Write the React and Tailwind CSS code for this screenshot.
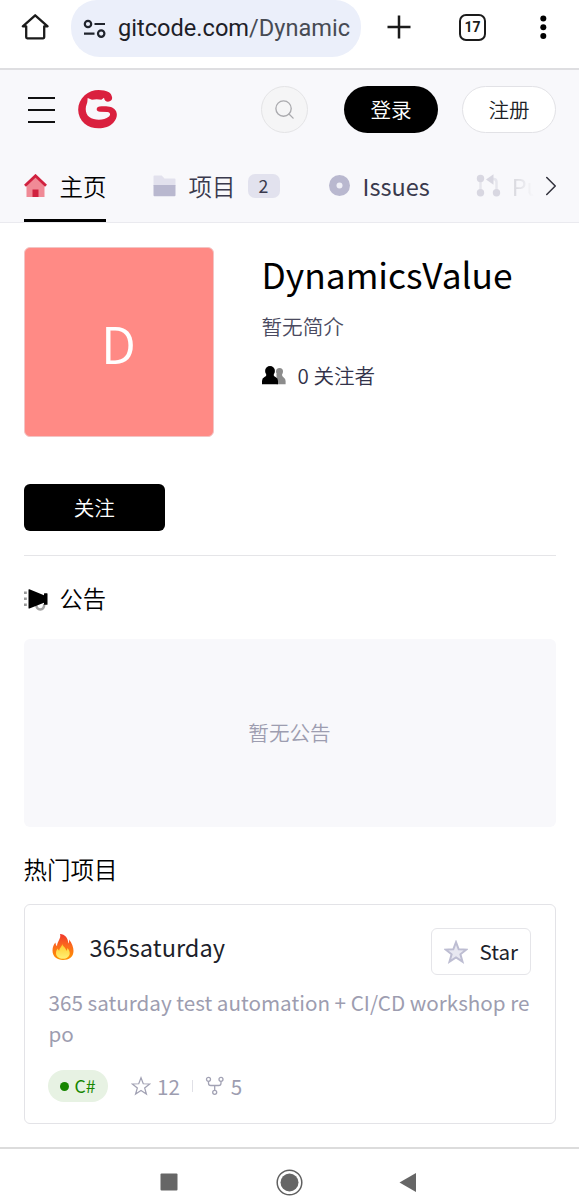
import { ChevronRight, Search } from "lucide-react";

function HomeOutlineIcon() {
  return (
    <svg width="28" height="28" viewBox="0 0 28 28" fill="none" className="shrink-0">
      <path
        d="M1.800 13.300h3.400v11q0 1 1 1h16q1 0 1-1v-11h3.400L14.200 2.300Z"
        stroke="#1b1b1b"
        strokeWidth="2.300"
        strokeLinejoin="round"
      />
    </svg>
  );
}

function TuneIcon() {
  return (
    <svg width="24" height="20" viewBox="0 0 24 20" fill="none" stroke="#20242c" strokeWidth="2.200" className="shrink-0">
      <circle cx="5" cy="5" r="3.200" />
      <path d="M11.500 5H22M1 14.600h10.500" />
      <circle cx="18.200" cy="14.600" r="3.200" />
    </svg>
  );
}

function Logo() {
  return (
    <svg width="39" height="39" viewBox="0 0 117 117" className="shrink-0">
      <path
        fill="#da203e"
        d="M93 7C72-3 41-4 20 16-6 40-6 79 20 101c23 20 67 18 86-3 13-14 14-31 3-41-8-7-18-8-38-8-10 0-15 3-15 9 0 5 4 7 10 7l22 1c10 1 10 9 4 14-14 12-43 12-58 1-12-9-13-27-8-38 3-7 2-11 3-19l13 5c8-2 20-2 28 0l8-6c1 8 6 12 12 12 9 0 14-7 12-14-1-5-4-11-9-14Z"
      />
    </svg>
  );
}

function HouseIcon() {
  return (
    <svg width="23" height="23" viewBox="0 0 23 23" className="shrink-0">
      <path fill="#f08a96" d="M2.500 10.500 11.500 2.500l9 8V23h-18z" />
      <path fill="#d0213f" d="M8.500 15.500h6V23h-6z" />
      <path fill="none" stroke="#d0213f" strokeWidth="2.800" d="m1 11.800 10.500-10L22 11.800" />
    </svg>
  );
}

function FolderIcon() {
  return (
    <svg width="23" height="22" viewBox="0 0 23 22" className="shrink-0">
      <path fill="#e2e1ed" d="M1.500.500h7.200L11.500 3.500h10q1 0 1 1V11H.500V1.500q0-1 1-1Z" />
      <path fill="#b9b8cf" d="M.500 10h22v10.300q0 1-1 1h-20q-1 0-1-1Z" />
    </svg>
  );
}

function IssueIcon() {
  return (
    <svg width="21" height="21" viewBox="0 0 21 21" className="shrink-0">
      <circle cx="10.500" cy="10.500" r="10.500" fill="#b9b8cf" />
      <circle cx="10.500" cy="10.500" r="3" fill="#f0f0f7" />
    </svg>
  );
}

function PullIcon() {
  return (
    <svg width="25" height="23" viewBox="0 0 25 23" className="shrink-0">
      <path fill="none" stroke="#e6e6ed" strokeWidth="2.500" d="M4.500 5v13M13 5h4.500q3 0 3 3v10" />
      <g fill="#d8d7e1">
        <circle cx="4.500" cy="4.500" r="3.700" />
        <circle cx="4.500" cy="18.700" r="3.700" />
        <circle cx="20.500" cy="18.700" r="3.700" />
        <path d="M10 5.500 17.500.3v10.400z" />
      </g>
    </svg>
  );
}

function FollowersIcon() {
  return (
    <svg width="24" height="19" viewBox="0 0 24 19" className="shrink-0">
      <g fill="#8c8c8c">
        <circle cx="17.500" cy="5.500" r="3.500" />
        <path d="M14.500 8h5.500q-.3 2.500 1.700 3.500 1.900 1 1.900 3.500v3.300h-9Z" />
      </g>
      <circle cx="8" cy="5" r="4.900" />
      <path d="M4.500 7.500h7q-.2 2.700 2 3.500 2.500 1 2.500 4v3.300H0V15q0-3 2.500-4 2.200-.8 2-3.500Z" />
    </svg>
  );
}

function HornIcon() {
  return (
    <svg width="25" height="22" viewBox="0 0 25 22" className="mt-[3px] shrink-0">
      <path fill="#999" d="M0 2.500h2.800v2.600H0zM0 8.500h2.800v2.600H0zM0 14.500h2.800v2.600H0z" />
      <path fill="none" stroke="#a3a3a3" strokeWidth="2.500" d="M12 15q.5 5.500 4.300 5.500t4-5.500" />
      <path d="M4.500.8q0-.8.9-.5L20 6.200V4.800q0-.5.5-.5h2.500q.5 0 .5.500v10.400q0 .5-.5.500h-2.500q-.5 0-.5-.500v-1.500L5.400 19.500q-.9.3-.9-.5Z" />
    </svg>
  );
}

function FireIcon() {
  return (
    <svg width="24" height="28" viewBox="0 0 24 28" className="shrink-0">
      <defs>
        <linearGradient id="flame" x1="0" y1="0" x2="0" y2="1">
          <stop offset="0" stopColor="#f0372c" />
          <stop offset=".45" stopColor="#fb6a1e" />
          <stop offset="1" stopColor="#ff9400" />
        </linearGradient>
        <linearGradient id="core" x1="0" y1="0" x2="0" y2="1">
          <stop offset="0" stopColor="#ffc928" />
          <stop offset="1" stopColor="#fff176" />
        </linearGradient>
      </defs>
      <path
        fill="url(#flame)"
        d="M9 1c5 .3 8.300 4 8.300 9.500.8-.8 1-2.300.7-4 3 3.500 4.500 8 4.500 11.500C22.500 24 18 27 12 27S1.500 23.500 1.500 17.500c0-3.500 1.200-6 3-8 .1 1.800.6 3 1.500 3.800C6 8.500 10.500 5.500 9 1Z"
      />
      <path
        fill="url(#core)"
        d="M11 10.500c.5 3 4 4 4.200 7.200.8-.5 1.200-1.500 1.200-2.700 1.500 1.600 2.300 3.300 2.300 5.200 0 3.500-2.900 5.600-6.700 5.600s-7-2.100-7-5.600c0-1.800.7-3.500 1.800-4.700.2 1 .6 1.800 1.400 2.200.1-3 3.500-4.200 2.800-7.200Z"
      />
    </svg>
  );
}

function StarIcon({ size, stroke, fill = "none", width }) {
  return (
    <svg width={size} height={size} viewBox="0 0 24 24" className="shrink-0">
      <path
        d="m12 2.200 2.700 7.100 7.700.300-6 4.700 2.100 7.400L12 17.400l-6.500 4.300 2.100-7.400-6-4.700 7.700-.300Z"
        fill={fill}
        stroke={stroke}
        strokeWidth={width}
      />
    </svg>
  );
}

function ForkIcon() {
  return (
    <svg width="20" height="20" viewBox="0 0 20 20" fill="none" stroke="#a2a2b4" strokeWidth="1.300" className="shrink-0">
      <circle cx="3.500" cy="3.300" r="2" />
      <circle cx="16" cy="3.300" r="2" />
      <circle cx="9.700" cy="16.300" r="2" />
      <path d="M3.500 5.300v1.900q0 2.300 2.300 2.300h7.900q2.300 0 2.300-2.300V5.300M9.700 9.500v4.800" />
    </svg>
  );
}

function BrowserBar() {
  return (
    <div className="flex h-[70px] items-start border-b-2 border-[#dedee1] bg-white">
      <div className="ml-[21px] mt-[13px] h-7">
        <HomeOutlineIcon />
      </div>
      <div className="ml-[22px] flex h-[57px] w-[290px] items-center rounded-b-[29px] rounded-t-[26px] bg-[#ebeffa] pl-3">
        <TuneIcon />
        <span className="ml-[11px] whitespace-nowrap font-['Roboto',sans-serif] text-[23.600px] font-normal text-[#1d2027]">
          gitcode.com<span className="text-[#474b54]">/Dynamic</span>
        </span>
      </div>
      <svg width="24" height="24" viewBox="0 0 24 24" className="ml-[26px] mt-[15px]">
        <path d="M12 .5v23M.5 12h23" stroke="#1b1b1b" strokeWidth="2.500" />
      </svg>
      <div className="ml-[48px] mt-[14px] flex h-[27px] w-[27px] items-center justify-center rounded-[7px] border-[2.500px] border-[#1b1b1b] font-['Roboto',sans-serif] text-[14px] font-bold text-[#1b1b1b]">
        17
      </div>
      <svg width="8" height="26" viewBox="0 0 8 26" className="ml-[53px] mt-[15px]">
        <circle cx="4.300" cy="3.500" r="3" />
        <circle cx="4.300" cy="12.300" r="3" />
        <circle cx="4.300" cy="21" r="3" />
      </svg>
    </div>
  );
}

function SiteHeader() {
  return (
    <header className="h-[153px] border-b border-[#eaeaef] bg-[#f8f8fb]">
      <div className="flex h-[79px] items-center pl-7">
        <div className="flex w-[27px] flex-col gap-[10px]">
          <span className="h-[2px] bg-[#111]" />
          <span className="h-[2px] bg-[#111]" />
          <span className="h-[2px] bg-[#111]" />
        </div>
        <div className="ml-[23px]">
          <Logo />
        </div>
        <div className="ml-[144px] flex h-[47px] w-[47px] items-center justify-center rounded-full border border-[#e4e4e6] bg-[#f5f5f6]">
          <Search size={23} strokeWidth={1.4} color="#aaaaae" />
        </div>
        <button className="ml-9 h-[47px] w-[94px] rounded-full bg-black text-[20.600px] leading-none text-white">
          登录
        </button>
        <button className="ml-6 h-[47px] w-[94px] rounded-full border border-[#e2e2e6] bg-white text-[20.600px] leading-none text-[#1d1f26]">
          注册
        </button>
      </div>

      <nav className="flex h-[73px] items-start pl-[23.500px] text-[23.500px] leading-[72px] text-[#3a3a4d]">
        <div className="flex h-[73px] w-[82px] items-center border-b-[3px] border-black pt-[3px] text-black">
          <HouseIcon />
          <span className="ml-[13px] whitespace-nowrap">主页</span>
        </div>
        <div className="ml-[47px] flex h-[73px] items-center">
          <FolderIcon />
          <span className="ml-[13px]">项目</span>
          <span className="ml-[12px] flex h-6 w-8 items-center justify-center rounded-[7px] bg-[#e2e2ee] text-[17.700px] font-normal leading-none">
            2
          </span>
        </div>
        <div className="ml-[49px] flex h-[73px] items-center">
          <IssueIcon />
          <span className="ml-[13px] font-normal">Issues</span>
        </div>
        <div className="ml-[46px] flex h-[73px] w-[64px] items-center">
          <PullIcon />
          <span className="ml-[11px] whitespace-nowrap bg-linear-to-r from-[#d6d6dc] to-transparent to-75% bg-clip-text font-normal text-transparent">
            Pu
          </span>
        </div>
        <div className="flex h-[73px] items-center">
          <ChevronRight size={34} strokeWidth={1.1} color="#33333d" className="-ml-[6px]" />
        </div>
      </nav>
    </header>
  );
}

function Profile() {
  return (
    <section className="border-b border-[#e5e5e8] pb-6">
      <div className="flex">
        <div className="flex h-[190px] w-[190px] items-center justify-center rounded-md border border-[#f3c4c4] bg-[#ff8a85] text-[51px] leading-none text-white">
          D
        </div>
        <div className="ml-12">
          <h1 className="text-[35.350px] font-normal leading-[53px] text-black">DynamicsValue</h1>
          <p className="mt-[10px] text-[20.600px] leading-[32px] text-[#4a4a60]">暂无简介</p>
          <p className="mt-4 flex items-center text-[20.600px] leading-[34px] text-[#33334a]">
            <FollowersIcon />
            <span className="ml-3">0 关注者</span>
          </p>
        </div>
      </div>
      <button className="mt-[47px] block h-[47px] w-[141.500px] rounded-md bg-black text-[20.600px] leading-none text-white">
        关注
      </button>
    </section>
  );
}

function ProjectCard() {
  return (
    <article className="mt-[17px] h-[220px] rounded-md border border-[#e3e3e7] px-6 pt-[23px] font-normal">
      <div className="flex h-[47px] justify-between">
        <div className="flex h-[37px] items-center">
          <span className="ml-[2px] mt-px">
            <FireIcon />
          </span>
          <span className="ml-[15px] text-[23.600px] leading-[36px] text-[#1d1f2b]">365saturday</span>
        </div>
        <button className="flex h-[47px] w-[100px] items-center rounded-md border border-[#e5e5e9] pl-3 text-[20.600px] leading-none text-[#1d1f2b]">
          <StarIcon size={24} stroke="#bdbdd2" fill="#e8e8f1" width={2} />
          <span className="ml-3">Star</span>
        </button>
      </div>
      <p className="mt-[12px] whitespace-nowrap text-[20.650px] leading-[31px] text-[#9d9db0]">
        365 saturday test automation + CI/CD workshop re
        <br />
        po
      </p>
      <div className="-ml-[0.500px] mt-[21px] flex h-8 items-center text-[20.600px] leading-8 text-[#9d9db0]">
        <span className="flex h-8 w-[60px] items-center justify-center gap-[5px] rounded-full bg-[#e7f2e3] text-[17.700px] leading-none text-[#178600]">
          <span className="h-[9px] w-[9px] rounded-full bg-[#178600]" />
          C#
        </span>
        <span className="ml-[23px] flex items-center">
          <StarIcon size={20} stroke="#a2a2b4" width={1.5} />
          <span className="ml-[6px]">12</span>
        </span>
        <span className="ml-3 h-3 w-px bg-[#e0e0e6]" />
        <span className="ml-3 flex items-center">
          <ForkIcon />
          <span className="ml-[6px]">5</span>
        </span>
      </div>
    </article>
  );
}

function NavigationBar() {
  return (
    <footer className="mt-[23px] flex h-[54px] items-start border-t-2 border-[#dcdcdc] bg-white pt-5">
      <svg width="18" height="27" viewBox="0 0 18 27" className="ml-[160px]">
        <rect x=".5" y="4.500" width="17" height="17" rx="1" fill="#666" />
      </svg>
      <svg width="27" height="27" viewBox="0 0 27 27" className="ml-[98px]">
        <circle cx="13.500" cy="13.500" r="12.300" fill="none" stroke="#606060" strokeWidth="1.500" />
        <circle cx="13.500" cy="13.500" r="9" fill="#666" />
      </svg>
      <svg width="18" height="27" viewBox="0 0 18 27" className="ml-[96px]">
        <path d="M.5 13.500 17 4v19Z" fill="#666" />
      </svg>
    </footer>
  );
}

export default function App() {
  return (
    <div className="h-[1200px] w-[579px] overflow-hidden bg-white font-['Noto_Sans_CJK_SC',sans-serif] font-[350] text-black">
      <BrowserBar />
      <SiteHeader />
      <main className="px-[23.500px] pt-6">
        <Profile />

        <h2 className="mt-[23px] flex h-[38px] items-center text-[23.300px] leading-[38px]">
          <HornIcon />
          <span className="ml-[11px]">公告</span>
        </h2>
        <div className="mt-[22px] flex h-[188px] items-center justify-center rounded-md bg-[#f8f8fb] pb-[2px] text-[20.600px] leading-none text-[#9d9db0]">
          暂无公告
        </div>

        <h2 className="mt-6 text-[23.500px] leading-[36px]">热门项目</h2>
        <ProjectCard />
      </main>
      <NavigationBar />
    </div>
  );
}
